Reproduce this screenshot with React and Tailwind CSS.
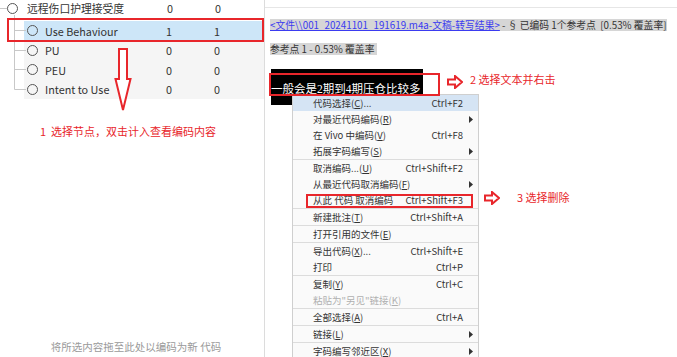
import React from 'react';

// Tree of codes on the left
const CHILDREN = [
  { name: 'Use Behaviour', a: '1', b: '1', selected: true },
  { name: 'PU', a: '0', b: '0' },
  { name: 'PEU', a: '0', b: '0' },
  { name: 'Intent to Use', a: '0', b: '0' },
];

// Context menu entries; 'sep' draws a divider
const MENU = [
  { label: '代码选择', key: 'C', tail: '...', shortcut: 'Ctrl+F2', active: true },
  { label: '对最近代码编码', key: 'R', sub: true },
  { label: '在 Vivo 中编码', key: 'V', shortcut: 'Ctrl+F8' },
  { label: '拓展字码编写', key: 'S', sub: true },
  'sep',
  { label: '取消编码...', key: 'U', shortcut: 'Ctrl+Shift+F2' },
  { label: '从最近代码取消编码', key: 'F', sub: true },
  { label: '从此 代码 取消编码', shortcut: 'Ctrl+Shift+F3' },
  'sep',
  { label: '新建批注', key: 'T', shortcut: 'Ctrl+Shift+A' },
  'sep',
  { label: '打开引用的文件', key: 'E' },
  'sep',
  { label: '导出代码', key: 'X', tail: '...', shortcut: 'Ctrl+Shift+E' },
  { label: '打印', shortcut: 'Ctrl+P' },
  'sep',
  { label: '复制', key: 'Y', shortcut: 'Ctrl+C' },
  { label: '粘贴为"另见"链接', key: 'K', disabled: true },
  'sep',
  { label: '全部选择', key: 'A', shortcut: 'Ctrl+A' },
  'sep',
  { label: '链接', key: 'L', sub: true },
  'sep',
  { label: '字码编写邻近区', key: 'X', sub: true },
];

function Circle() {
  return <span className="block w-[11px] h-[11px] rounded-full border-[1.5px] border-[#555] shrink-0" />;
}

function RightArrow() {
  return (
    <svg width="16" height="14" viewBox="0 0 16 14">
      <polygon points="1,4.5 8,4.5 8,1 15,7 8,13 8,9.5 1,9.5" fill="white" stroke="#e8262b" strokeWidth="2" strokeLinejoin="miter" />
    </svg>
  );
}

function MenuItem({ item }) {
  return (
    <div
      className={`flex items-center h-[16px] pl-[20px] ${item.active ? 'bg-[#d5e4f4]' : ''} ${
        item.disabled ? 'text-[#b0b0b0]' : 'text-[#333]'
      }`}
    >
      <span className="whitespace-pre">
        {item.label}
        {item.key && (
          <>
            (<span className="underline">{item.key}</span>)
          </>
        )}
        {item.tail}
      </span>
      <span className="flex-1" />
      {item.shortcut && <span>{item.shortcut}</span>}
      <span className="w-[15px] flex justify-center">
        {item.sub && (
          <svg width="4" height="7" viewBox="0 0 4 7">
            <polygon points="0,0 4,3.5 0,7" fill="#333" />
          </svg>
        )}
      </span>
    </div>
  );
}

export default function App() {
  return (
    <div className="relative w-[677px] h-[357px] overflow-hidden bg-white flex font-['Noto_Sans_CJK_SC',sans-serif]">
      {/* Left: code tree */}
      <div className="relative w-[265px] h-full border-r border-[#dcdcdc] flex flex-col text-[10.8px] text-[#333]">
        <div className="relative">
          {/* connector lines */}
          <svg className="absolute left-0 top-0" width="30" height="100">
            <line x1="0" y1="8.5" x2="7" y2="8.5" stroke="#c8c8c8" />
            <line x1="14.5" y1="15" x2="14.5" y2="89.5" stroke="#c8c8c8" />
            <line x1="14.5" y1="30.5" x2="26" y2="30.5" stroke="#c8c8c8" />
            <line x1="14.5" y1="50.5" x2="26" y2="50.5" stroke="#c8c8c8" />
            <line x1="14.5" y1="69.5" x2="26" y2="69.5" stroke="#c8c8c8" />
            <line x1="14.5" y1="89.5" x2="26" y2="89.5" stroke="#c8c8c8" />
          </svg>

          <div className="flex items-center h-[16px] pl-[7px]">
            <Circle />
            <span className="ml-[9px] w-[133px]">远程伤口护理接受度</span>
            <span className="w-[20px] text-center">0</span>
            <span className="ml-[28px] w-[20px] text-center">0</span>
          </div>

          <div className="mt-[5px] ml-[24px]">
            {CHILDREN.map((c) => (
              <div
                key={c.name}
                className={`flex items-center h-[19.5px] pl-[3px] ${c.selected ? 'bg-[#cde6f8]' : 'bg-[#f5f5f5]'}`}
              >
                <Circle />
                <span className="ml-[7px] w-[114px] whitespace-nowrap">{c.name}</span>
                <span className="w-[20px] text-center">{c.a}</span>
                <span className="ml-[28px] w-[20px] text-center">{c.b}</span>
              </div>
            ))}
          </div>

          {/* red box around selected node */}
          <div className="absolute left-[7px] top-[18px] w-[257px] h-[24px] border-2 border-[#e8262b]" />
        </div>

        <div className="flex-1" />
        <div className="pb-[2px] text-center text-[10.5px] text-[#9a9a9a] pl-[8px]">将所选内容拖至此处以编码为新 代码</div>

        {/* annotation 1 */}
        <svg className="absolute left-[113px] top-[47px]" width="20" height="66" viewBox="113 47 20 66">
          <polygon points="119,49 127,49 127,79 130.5,79 123,110 115.5,79 119,79" fill="white" stroke="#e8262b" strokeWidth="2" />
        </svg>
        <div className="absolute left-[40px] top-[123px] text-[11px] leading-[16px] text-[#e8262b] whitespace-pre">1  选择节点，双击计入查看编码内容</div>
      </div>

      {/* Right: document content */}
      <div className="relative flex-1 h-full">
        <div className="h-[8px] border-b border-[#e6e6e6]" />
        <div className="pl-[5px] text-[9.8px] text-[#333]">
          <div className="mt-[11px] h-[12px] leading-[12px] flex">
            <span className="bg-[#d6d6d6] whitespace-pre">
              <span className="text-[#3b3bf0] underline">{'<文件\\\\001_20241101_191619.m4a-文稿-转写结果>'}</span>
              {' - § 已编码 1个参考点  [0.53% 覆盖率]'}
            </span>
          </div>
          <div className="mt-[12px] h-[12px] leading-[12px] flex">
            <span className="bg-[#d6d6d6] whitespace-pre pr-[3px]">参考点 1 - 0.53% 覆盖率</span>
          </div>
          <div className="mt-[14px] ml-[1px] w-[152px] h-[36px] bg-black pt-[12px]">
            <span className="block text-white text-[11.5px] leading-[16px] whitespace-nowrap font-['Liberation_Serif','Noto_Sans_CJK_SC',serif]">一般会是2期到4期压仓比较多</span>
          </div>
        </div>
      </div>

      {/* Context menu */}
      <div className="absolute left-[292px] top-[94px] w-[187px] h-[280px] bg-[#fafafa] border border-[#cfcfcf] text-[9.5px] leading-[16px]">
        {MENU.map((item, i) =>
          item === 'sep' ? <div key={i} className="h-px bg-[#dcdcdc]" /> : <MenuItem key={i} item={item} />
        )}
      </div>

      {/* annotation 2 */}
      <div className="absolute left-[269px] top-[73px] w-[171px] h-[23px] border-2 border-[#e8262b]" />
      <div className="absolute left-[447px] top-[75px]"><RightArrow /></div>
      <div className="absolute left-[470px] top-[71px] text-[11px] leading-[16px] text-[#e8262b]">2 选择文本并右击</div>

      {/* annotation 3 */}
      <div className="absolute left-[306px] top-[194px] w-[167px] h-[14px] border-2 border-[#e8262b]" />
      <div className="absolute left-[484px] top-[191px]"><RightArrow /></div>
      <div className="absolute left-[517px] top-[189px] text-[11px] leading-[16px] text-[#e8262b]">3 选择删除</div>
    </div>
  );
}
